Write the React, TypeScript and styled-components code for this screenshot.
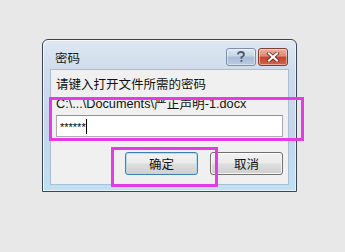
import React from "react";
import styled, { createGlobalStyle } from "styled-components";

const Global = createGlobalStyle`
  html, body { margin: 0; padding: 0; background: #e8e8e8; }
  body { font-family: "Liberation Sans", "Noto Sans CJK SC", sans-serif; }
`;

const Page = styled.div`
  position: relative;
  width: 345px;
  height: 252px;
  box-sizing: border-box;
  padding: 39px 0 0 42px;
  background: #e8e8e8;
`;

const Window = styled.div`
  width: 255px;
  height: 153px;
  box-sizing: border-box;
  border: 1px solid #3a4656;
  border-radius: 6px 6px 0 0;
  background: linear-gradient(180deg, #dfe8f3 0%, #cfdcec 20%, #c5d6ea 60%, #bfe0f3 100%);
  box-shadow: inset 1px 1px 0 rgba(255, 255, 255, 0.7), inset -1px -1px 0 rgba(255, 255, 255, 0.6);
  display: flex;
  flex-direction: column;
`;

const TitleBar = styled.div`
  height: 29px;
  display: flex;
  align-items: flex-start;
  justify-content: space-between;
  padding: 0 8px 0 12px;
`;

const Title = styled.span`
  font-family: "Noto Sans CJK SC", sans-serif;
  font-size: 12.5px;
  line-height: 16px;
  color: #1a1a1a;
  margin-top: 10px;
`;

const Caption = styled.div`
  display: flex;
  margin-top: 8px;
  gap: 2px;
`;

const CapButton = styled.div<{ $close?: boolean }>`
  width: 30px;
  height: 18px;
  box-sizing: border-box;
  border: 1px solid ${(p) => (p.$close ? "#8a3a2a" : "#7d8fa8")};
  border-radius: 3px;
  display: flex;
  align-items: center;
  justify-content: center;
  background: ${(p) =>
    p.$close
      ? "linear-gradient(180deg, #ecb1a3 0%, #dd8873 45%, #c6432a 50%, #d2664d 100%)"
      : "linear-gradient(180deg, #dfe7f1 0%, #c7d5e6 45%, #a8bcd6 50%, #b8cbe2 100%)"};
  box-shadow: inset 0 0 0 1px rgba(255, 255, 255, 0.45);
`;

const Panel = styled.div`
  margin: 0 7px;
  height: 116px;
  box-sizing: border-box;
  background: #f0f0f0;
  border: 1px solid #a9bdd4;
  padding: 7px 5px 0 5px;
  display: flex;
  flex-direction: column;
`;

const Line = styled.div<{ $gap?: number; $size?: number }>`
  font-size: ${(p) => p.$size ?? 12}px;
  line-height: 16px;
  height: 16px;
  color: #111;
  white-space: nowrap;
  margin-top: ${(p) => p.$gap ?? 0}px;
`;

const Input = styled.div`
  margin-top: 3px;
  height: 22px;
  box-sizing: border-box;
  border: 1px solid #abadb3;
  border-top-color: #8f9298;
  background: #fff;
  display: flex;
  align-items: center;
  padding-left: 3px;
  font-family: "Liberation Sans", sans-serif;
  font-size: 11px;
  color: #000;
`;

const Stars = styled.span`
  line-height: 10px;
  padding-top: 2px;
`;

const Caret = styled.span`
  display: inline-block;
  width: 1px;
  height: 15px;
  background: #000;
`;

const ButtonRow = styled.div`
  margin-top: 15px;
  display: flex;
  justify-content: flex-end;
  gap: 12px;
`;

const Button = styled.div<{ $default?: boolean }>`
  width: 73px;
  height: 23px;
  box-sizing: border-box;
  border: 1px solid ${(p) => (p.$default ? "#3c7fb1" : "#707070")};
  border-radius: 3px;
  display: flex;
  align-items: center;
  justify-content: center;
  font-family: "Noto Sans CJK SC", sans-serif;
  font-size: 12.5px;
  color: #111;
  background: linear-gradient(180deg, #f2f2f2 0%, #ebebeb 48%, #dddddd 52%, #cfcfcf 100%);
  box-shadow: inset 0 0 0 1px ${(p) => (p.$default ? "rgba(170,220,245,0.9)" : "rgba(255,255,255,0.8)")};
`;

const Highlight = styled.div<{ $x: number; $y: number; $w: number; $h: number }>`
  position: absolute;
  left: ${(p) => p.$x}px;
  top: ${(p) => p.$y}px;
  width: ${(p) => p.$w}px;
  height: ${(p) => p.$h}px;
  box-sizing: border-box;
  border: 3px solid #e53be5;
  pointer-events: none;
`;

const HelpIcon = () => (
  <svg width="10" height="12" viewBox="0 0 10 12">
    <path
      d="M2 3.6 C2 1.8 3.4 1 5 1 C6.8 1 8 2 8 3.5 C8 5 6.6 5.4 5.4 6.2 L5.4 7.8"
      fill="none"
      stroke="#4a5a70"
      strokeWidth="1.8"
    />
    <rect x="4.5" y="9" width="1.8" height="1.8" fill="#4a5a70" />
  </svg>
);

const CloseIcon = () => (
  <svg width="14" height="10" viewBox="0 0 14 10">
    <path d="M3 1.5 L11 8.5 M11 1.5 L3 8.5" stroke="#5a1a10" strokeWidth="3.6" strokeLinecap="square" />
    <path d="M3 1.5 L11 8.5 M11 1.5 L3 8.5" stroke="#ffffff" strokeWidth="2.2" strokeLinecap="square" />
  </svg>
);

export default function App() {
  return (
    <Page>
      <Global />
      <Window>
        <TitleBar>
          <Title>密码</Title>
          <Caption>
            <CapButton>
              <HelpIcon />
            </CapButton>
            <CapButton $close>
              <CloseIcon />
            </CapButton>
          </Caption>
        </TitleBar>
        <Panel>
          <Line $size={12.5}>请键入打开文件所需的密码</Line>
          <Line $gap={3} $size={12.7}>C:\...\Documents\严正声明-1.docx</Line>
          <Input>
            <Stars>******</Stars>
            <Caret />
          </Input>
          <ButtonRow>
            <Button $default>确定</Button>
            <Button>取消</Button>
          </ButtonRow>
        </Panel>
      </Window>
      <Highlight $x={49} $y={97} $w={255} $h={44} />
      <Highlight $x={111} $y={147} $w={107} $h={40} />
    </Page>
  );
}
